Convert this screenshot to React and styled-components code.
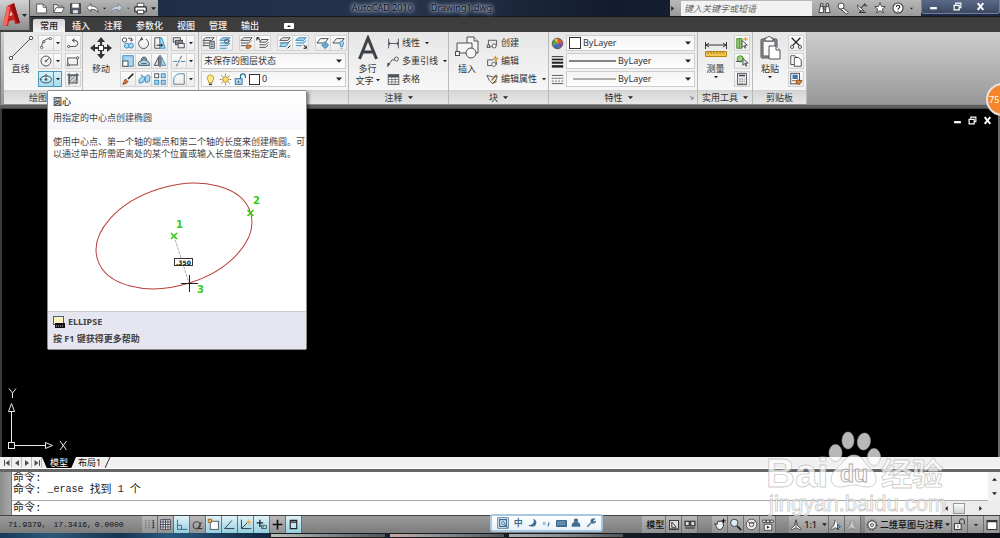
import { useState } from "react";
import styled, { createGlobalStyle, css } from "styled-components";

const GlobalStyle = createGlobalStyle`
  * { box-sizing: border-box; }
  body {
    margin: 0;
    overflow: hidden;
    font-family: "Noto Sans", "Noto Sans CJK SC", sans-serif;
    font-size: 9px;
    line-height: 12px;
    color: #333;
  }
  button, input, select { font: inherit; color: inherit; margin: 0; padding: 0; }
  button { background: none; border: none; }
  svg { display: block; flex: none; }
`;

const Window = styled.div`
  display: flex;
  flex-direction: column;
  min-height: 100vh;
  position: relative;
  overflow: hidden;
  background: #000;
`;

/* ---------- title and tabs ---------- */

const Header = styled.header`
  display: grid;
  grid-template-columns: 30px 1fr;
  grid-template-rows: 17px 15px;
  background: #3d3d3d;
`;

const AppButton = styled.button`
  grid-row: 1 / 3;
  height: 30px;
  display: flex;
  align-items: center;
  padding-left: 2px;
  background: linear-gradient(#d2d2d2, #8c8c8c);
  border-right: 1px solid #555;
`;

const TitleBar = styled.div`
  display: flex;
  min-width: 0;
  background: linear-gradient(90deg, #1d2c47, #25324a 40%, #131c2e 60%, #1e2b45);
  border-bottom: 1px solid #15181e;
`;

const QuickAccess = styled.div`
  display: flex;
  align-items: center;
  gap: 4px;
  width: 128px;
  padding-left: 5px;
  background: linear-gradient(#b6b6b6, #949494);
`;

const IconButton = styled.button`
  display: flex;
  align-items: center;
  justify-content: center;
`;

const TitleText = styled.div`
  flex: 1;
  display: flex;
  align-items: center;
  justify-content: center;
  gap: 18px;
  padding-left: 16px;
  color: #0b0f17;
  white-space: nowrap;
  text-shadow: 0 0 2px #a9b3c4, 0 0 4px #a9b3c4, 0 0 5px #8f9bb0, 0 0 7px #8f9bb0;
`;

const InfoCenter = styled.div`
  display: flex;
  align-items: center;
  gap: 6px;
  width: 251px;
  background: linear-gradient(#b8b8b8, #9a9a9a);
`;

const SearchBox = styled.input`
  width: 131px;
  height: 15px;
  padding-left: 3px;
  border: none;
  border-radius: 0;
  background: #f2f2f2;
  font-style: italic;
  outline: none;
  &::placeholder { color: #666; opacity: 1; }
`;

const WindowButtons = styled.div`
  display: flex;
  align-items: center;
  justify-content: space-between;
  width: 79px;
  height: 14px;
  padding: 0 14px 0 7px;
  color: #fff;
  background: linear-gradient(#5a6a87, #3b4963);
  border: 1px solid #72809a;
  border-top: none;
  border-radius: 0 0 3px 3px;
`;

const TabRow = styled.nav`
  display: flex;
  align-items: stretch;
  padding: 2px 0 0 3px;
`;

const Tab = styled.button`
  padding: 0 7px;
  line-height: 13px;
  font-weight: 500;
  color: #f2f2f2;
  ${({ $active }) => $active && css`
    color: #222;
    background: linear-gradient(#d5d5d5, #f4f4f4);
    border-radius: 2px 2px 0 0;
  `}
`;

/* ---------- ribbon ---------- */

const Ribbon = styled.div`
  display: flex;
  height: 72px;
  padding-left: 3px;
  background: linear-gradient(#cecece, #989898);
  border-left: 1px solid #777;
`;

const PanelBox = styled.section`
  display: flex;
  flex-direction: column;
  width: ${({ $width }) => $width}px;
  flex: none;
  border-right: 1px solid #b9b9b9;
  background: linear-gradient(#e6e6e6, #fbfbfb);
`;

const PanelBody = styled.div`
  display: flex;
  flex: 1;
  gap: 3px;
  padding: 3px 2px 0;
`;

const PanelTitle = styled.div`
  display: flex;
  align-items: center;
  justify-content: center;
  gap: 4px;
  height: 14px;
  padding: 0 3px;
  background: linear-gradient(#d6d6d6, #e6e6e6);
  border-top: 1px solid #cfcfcf;
`;

const TitleLabel = styled.div`
  flex: 1;
  display: flex;
  align-items: center;
  justify-content: center;
  gap: 5px;
  white-space: nowrap;
`;

const BigButton = styled.button`
  display: flex;
  flex-direction: column;
  align-items: center;
  width: ${({ $width }) => $width}px;
  flex: none;
  white-space: nowrap;
  svg:first-child { margin-bottom: 2px; }
`;

const BigLabel = styled.span`
  display: flex;
  align-items: center;
  gap: 2px;
`;

const Column = styled.div`
  display: flex;
  flex-direction: column;
  gap: 2px;
  flex: ${({ $grow }) => ($grow ? 1 : "none")};
  min-width: 0;
`;

const Row = styled.div`
  display: flex;
  align-items: center;
  gap: ${({ $gap = 0 }) => $gap}px;
`;

const Tool = styled.button`
  display: flex;
  align-items: center;
  justify-content: center;
  width: ${({ $narrow }) => ($narrow ? 8 : 16)}px;
  height: 16px;
  border: 1px solid ${({ $on }) => ($on ? "#4a9ab8" : "#d3d3d3")};
  background: ${({ $on }) => ($on ? "linear-gradient(#d6f1fa, #a5dcf0)" : "linear-gradient(#fbfbfb, #ececec)")};
  & + & { border-left: none; }
`;

const ListButton = styled.button`
  display: flex;
  align-items: center;
  gap: 2px;
  height: 16px;
  white-space: nowrap;
`;

const Field = styled.div`
  display: flex;
  align-items: center;
  gap: 2px;
  height: 16px;
  flex: 1;
  min-width: 0;
  padding: 0 3px 0 2px;
  border: 1px solid #cdcdcd;
  background: linear-gradient(#f4f4f4, #fdfdfd);
`;

const Select = styled.select`
  flex: 1;
  min-width: 0;
  height: 14px;
  border: none;
  outline: none;
  background: transparent;
  appearance: none;
`;

const Swatch = styled.span`
  width: ${({ $size }) => $size}px;
  height: ${({ $size }) => $size}px;
  border: 1px solid #333;
  background: #fff;
`;

const RibbonEdge = styled.div`
  height: 5px;
  background: #5e5e5e;
  border-top: 1px solid #8e8e8e;
  border-bottom: 1px solid #444;
`;

/* ---------- drawing area ---------- */

const Canvas = styled.main`
  flex: 1;
  display: flex;
  flex-direction: column;
  justify-content: space-between;
  background: #000;
  border-left: 2px solid #3c3c3c;
  border-right: 2px solid #6d6d6d;
`;

const DocButtons = styled.div`
  display: flex;
  align-self: flex-end;
  gap: 6px;
  padding: 7px 6px 0 0;
  color: #fff;
`;

const LayoutBar = styled.div`
  display: flex;
  align-items: stretch;
  height: 12px;
  padding-left: 2px;
  background: #f0f0f0;
  border-bottom: 1px solid #fff;
`;

const LayoutNav = styled.button`
  display: flex;
  align-items: center;
  justify-content: center;
  width: 10px;
  border-right: 1px solid #bbb;
`;

const LayoutTab = styled.button`
  line-height: 11px;
  padding: 0 8px;
  color: ${({ $active }) => ($active ? "#fff" : "#111")};
  background: ${({ $active }) => ($active ? "#000" : "transparent")};
  clip-path: ${({ $active }) => ($active ? "polygon(0 0, 100% 0, 86% 100%, 14% 100%)" : "none")};
  & + & { padding: 0 4px 0 2px; }
`;

/* ---------- command window ---------- */

const CommandWindow = styled.div`
  display: grid;
  grid-template-columns: 12px 1fr 12px;
  grid-template-rows: 29px 14px;
  border-top: 3px solid #666;
  background: #fff;
`;

const Grip = styled.div`
  grid-row: 1 / 3;
  background: linear-gradient(90deg, #8c8c8c, #a8a8a8);
  border-right: 1px solid #777;
`;

const History = styled.div`
  overflow: hidden;
  border-bottom: 1px solid #a8a8a8;
`;

const CommandText = styled.div`
  display: flex;
  gap: 6px;
  padding-left: 1px;
  height: 12px;
  font-family: "Liberation Mono", "Noto Sans CJK SC", monospace;
  font-size: 11px;
  line-height: 12px;
  color: #222;
`;

const Latin = styled.span`
  font-size: 10px;
`;

const VScroll = styled.div`
  display: flex;
  flex-direction: column;
  justify-content: space-between;
  align-items: center;
  padding: 5px 0;
  background: #f0f0f0;
`;

const CommandLine = styled.div`
  grid-column: 2 / 4;
  display: flex;
  align-items: center;
`;

const CommandLabel = styled.label`
  padding-left: 1px;
  font-family: "Liberation Mono", "Noto Sans CJK SC", monospace;
  font-size: 11px;
  color: #222;
`;

const CommandInput = styled.input`
  flex: 1;
  height: 12px;
  border: none;
  outline: none;
  background: transparent;
`;

const HScroll = styled.div`
  display: flex;
  align-items: center;
  justify-content: space-between;
  width: 60px;
  height: 14px;
  padding: 0 17px 0 4px;
  background: #ececec;
`;

const Thumb = styled.span`
  width: 12px;
  height: 11px;
  margin-right: 10px;
  border: 1px solid #999;
  background: linear-gradient(#fafafa, #d0d0d0);
`;

/* ---------- status bar ---------- */

const StatusBar = styled.footer`
  display: flex;
  align-items: stretch;
  height: 18px;
  background: linear-gradient(#9a9a9a, #7c7c7c);
  border-top: 1px solid #444;
  color: #111;
`;

const Coordinates = styled.div`
  display: flex;
  align-items: center;
  width: 142px;
  padding-left: 8px;
  gap: 7px;
  font-family: "Liberation Mono", monospace;
  font-size: 8px;
  span:last-child { margin-left: -4px; }
`;

const StatusButton = styled.button`
  display: flex;
  align-items: center;
  justify-content: center;
  gap: 2px;
  min-width: 16px;
  padding: 0 1px;
  white-space: nowrap;
  font-weight: 500;
  border-right: 1px solid #6f6f6f;
  background: ${({ $on }) => ($on ? "linear-gradient(#e2f3f8, #94cfe0)" : "linear-gradient(#b9b9b9, #929292)")};
`;

const Gap = styled.span`
  width: ${({ $width }) => $width}px;
`;

const Spacer = styled.span`
  flex: 1;
`;

const Taskbar = styled.div`
  display: flex;
  gap: 3px;
  height: 5px;
  padding-left: 270px;
  background: linear-gradient(90deg, #16395a, #2b5876 5%, #173553 12%, #27597f 17%, #122a44 26%, #141a24 60%, #0b0d12);
`;

const Task = styled.span`
  width: 116px;
  height: 5px;
  border: 1px solid #1b1b1b;
  background: linear-gradient(90deg, ${({ $tint }) => $tint}, #8d9499 40%, #4d545a);
`;

/* ---------- floating layers ---------- */

const Tooltip = styled.aside`
  position: absolute;
  top: 90px;
  left: 47px;
  width: 260px;
  border: 1px solid #8a8a8a;
  border-radius: 2px;
  background: #fff;
  box-shadow: 2px 2px 3px rgba(0, 0, 0, 0.45);
  white-space: nowrap;
  color: #444;
`;

const TipHead = styled.div`
  padding: 5px 5px 6px;
  background: linear-gradient(#fff, #f7f7fa);
  display: flex;
  flex-direction: column;
  gap: 4px;
  strong { color: #333; font-weight: 500; }
`;

const TipText = styled.p`
  margin: 0;
  padding: 6px 5px 0;
`;

const TipFoot = styled.div`
  display: flex;
  flex-direction: column;
  gap: 5px;
  padding: 4px 5px;
  border-top: 1px solid #c9c9d2;
  background: #e6e6f1;
  font-weight: 700;
  span { display: flex; align-items: center; gap: 3px; }
`;

const ImeBar = styled.div`
  position: absolute;
  left: 49%;
  bottom: 6px;
  display: flex;
  align-items: center;
  justify-content: space-between;
  width: 113px;
  height: 18px;
  padding: 0 5px;
  color: #3f6c92;
  background: linear-gradient(#fff, #eaf3fa);
  border: 2px solid #a6c8e2;
  border-radius: 3px;
`;

const Badge = styled.div`
  position: absolute;
  top: 83px;
  right: -19px;
  width: 33px;
  height: 33px;
  padding-left: 1px;
  border: 2px solid #e9e2dc;
  border-radius: 50%;
  background: #f68428;
  color: #fff;
  font-size: 9px;
  line-height: 29px;
`;

const Watermark = styled.svg`
  position: absolute;
  right: 52px;
  bottom: 16px;
  pointer-events: none;
`;

/* ---------- icons ---------- */

const G = "#4a4f55";
const B = "#3d8fc0";
const L = "#a9d6ee";

const glyphs = {
  arc: <><path d="M3 13C3 7 7 3 12 3" /><circle cx="3" cy="13" r="1.3" fill="#fff" /><circle cx="5.5" cy="6.5" r="1.3" fill="#fff" /><circle cx="13" cy="3" r="1.3" fill="#fff" /></>,
  circle: <><circle cx="8" cy="8" r="5.7" /><circle cx="8" cy="8" r="1" /><path d="M8.5 7.5 12 4" /></>,
  ellipse: <><ellipse cx="8" cy="8.5" rx="6.5" ry="4" /><circle cx="8" cy="8.5" r="1" fill={G} /><path d="M8 3v3M1 8.500h2" /><circle cx="8" cy="4" r="1" fill="#fff" /></>,
  polyline: <><path d="M3 12h7a3.500 3.500 0 0 0 0-7H8" /><path d="M10 3 7 5l3 2" /><circle cx="3" cy="12" r="1.300" fill="#fff" /></>,
  rect: <><rect x="2" y="4.500" width="11" height="8" /><circle cx="2.500" cy="12.500" r="1.300" fill="#fff" /><circle cx="13.300" cy="4.300" r="1.300" fill="#fff" /></>,
  hatch: <><rect x="3.500" y="3.500" width="9" height="9" fill="#cfcfcf" /><path d="M1 3.500h14M3.500 1v14M12.500 1v9" /><path d="M3 8l5-5M3 12l9-9M7 13l6-6M11 14l3-3" strokeWidth=".7" /></>,
  copy: <><circle cx="4" cy="4.500" r="2.500" /><circle cx="6.500" cy="11" r="2.800" fill={L} stroke={B} /><circle cx="11.500" cy="11" r="2.800" fill={L} stroke={B} /><path d="M8 2.500h4v3M10.500 4l1.500 2 1.500-2" /></>,
  rotate: <><path d="M5 3.500a5.700 5.700 0 1 0 5 0" /><path d="M5 1l1.500 3-3 .8" fill={G} /></>,
  stretch: <><path d="M2 2h6v12H2z" /><path d="M8 2h2l4 12H8z" fill={L} stroke={B} /><path d="M4 10.500h7M9 9l2 1.500L9 12" stroke="#222" /></>,
  scale: <><rect x="2" y="2" width="12" height="12" fill={L} stroke={B} /><rect x="2" y="8" width="6" height="6" fill="#fff" /></>,
  offset: <><path d="M2 13h12c1-3-1-5-3-5 1-6-7-6-6 0-3 0-4 2-3 5z" fill={L} stroke={G} /><path d="M5 11h6M7 8a1.500 1.500 0 1 1 2 0" /></>,
  mirror: <><path d="M6.500 3v10h-5z" fill="#ddd" /><path d="M9.500 3v10h5z" fill={L} stroke={B} /><path d="M8 1v14" stroke="#222" /></>,
  erase: <><path d="m14 2-6 6" stroke="#222" strokeWidth="2" /><path d="M5 8l3 3-2 2-4 1z" fill="#d4783c" stroke="#944418" /></>,
  explode: <><path d="M2 9l4-4 3 1-1 5-5 2zM9 6l4-3 2 2-1 6-4 1z" fill={L} stroke={B} /><path d="M5 3l1 2" /></>,
  array: <><rect x="2" y="2" width="4.500" height="4.500" fill="#fff" /><rect x="9.500" y="2" width="4.500" height="4.500" fill={L} stroke={B} /><rect x="2" y="9.500" width="4.500" height="4.500" fill={L} stroke={B} /><rect x="9.500" y="9.500" width="4.500" height="4.500" fill={L} stroke={B} /></>,
  order: <><rect x="1.500" y="2" width="8" height="5" fill="#eee" /><rect x="4" y="5" width="8" height="5" fill="#888" /><rect x="7" y="8.500" width="7" height="5" fill="#eee" /></>,
  trim: <><path d="M1 8.500h5M10 8.500h5" stroke={B} /><path d="M11 2 5 14" strokeDasharray="4 1" /></>,
  fillet: <><path d="M2 14V9a7 7 0 0 1 7-7h5" stroke={B} /><path d="M2 14h12V2" strokeWidth=".8" /></>,
  layer: <><path d="M4 2h10l-3 3H1zM1 8h8M1 11h7M1 8l2-2M1 11l2-2" /><rect x="9" y="6" width="5" height="8" fill="#e7f0f5" /><path d="M10 8h3M10 10h3M10 12h3" /></>,
  layerCurrent: <><path d="M5 2h9l-3 3H2zM2 8h9l3-3M2 11h9l3-3M2 14h8" stroke={B} fill={L} /><circle cx="10" cy="6" r="2.500" /></>,
  layerMatch: <><path d="M4 2h10l-3 3H1zM1 8h9M1 11h6M10 8l3-3" /><path d="M8 10l5 1-2 3-4 0z" fill="#d08a3c" stroke="#985820" /></>,
  layerPrev: <><path d="M6 4h8l-3 3H4zM4 10h7l3-3M4 13h7l3-3" /><path d="M5 5 1 2M1 2h3M1 2v3" stroke="#111" /></>,
  layerIso: <><path d="M5 2h9l-3 3H2zM2 8h9l3-3" /><path d="M5 8h7l-3 4H2z" fill={L} stroke={B} /><path d="M11 14l3-3" stroke="#111" /></>,
  layerUniso: <><path d="M5 2h9l-3 3H2zM2 8h9l3-3M2 11h7" stroke={B} fill={L} /><path d="M11 10l3 4M14 11v3h-3" stroke="#111" /></>,
  layerFreeze: <><path d="M5 3h9l-4 5H1z" /><circle cx="10.500" cy="10.500" r="3" fill={L} stroke={B} /><path d="M10.500 6v9M6 10.500h9" stroke={B} /></>,
  layerOff: <><path d="M5 3h9l-4 5H1z" /><path d="M9 9a2.200 2.200 0 1 1 4 0l-1 3h-2zM10 14h2" fill={L} stroke={B} /></>,
  bulb: <><path d="M5 9a4 4 0 1 1 6 0l-1 3H6z" fill="#ffe88c" stroke="#b59430" /><path d="M6 14h4" stroke="#444" strokeWidth="2" /></>,
  sun: <><circle cx="8" cy="8" r="3.500" fill="#ffe070" stroke="#a5832a" /><path d="M8 1v2M8 13v2M1 8h2M13 8h2M3 3l1.500 1.500M11.500 11.500 13 13M13 3l-1.500 1.500M4.500 11.500 3 13" stroke="#76612a" /></>,
  unlock: <><rect x="1.500" y="7" width="8.500" height="7" fill={L} stroke="#2b7297" /><path d="M8 7V4a3 3 0 0 1 6 0v2" stroke="#2b7297" strokeWidth="1.500" /><path d="M5.700 10v2" stroke="#222" /></>,
  linear: <><path d="M2 2v12M14 2v12M2 8h12M4 6 2 8l2 2M12 6l2 2-2 2" /></>,
  leader: <><path d="M1 14 6 6h3" /><path d="M1 14v-4l2 1z" fill={G} /><circle cx="11.500" cy="5" r="2.500" /></>,
  table: <><rect x="1.500" y="2" width="13" height="12" fill="#fff" /><path d="M1.500 4h13" strokeWidth="3" /><path d="M6 4v10M10 4v10M2 8h12M2 11h12" strokeWidth=".8" /></>,
  create: <><path d="M3 4h10v6h-2M3 4v8h4" /><circle cx="10" cy="11" r="2.500" fill="#fff" /><rect x="1.500" y="10" width="3" height="3" fill="#fff" /></>,
  edit: <><path d="M2 6h7M2 6v7h5M13 8v4" /><circle cx="9.500" cy="11.500" r="2.500" fill="#fff" /><path d="M12 1 9 5h3l-1 4 4-5h-3z" fill="#f4b33c" stroke="#c37a13" strokeWidth=".7" /></>,
  attrib: <><path d="M1 3l3 6 4 4 4-4 2-5-5 1-3-1z" fill="#eee" /><path d="M7 9l6-7M8 13l5-3" stroke="#8a5c22" strokeWidth="1.500" /></>,
  wheel: <><circle cx="8" cy="8" r="6.500" fill="#f0c23a" stroke="none" /><path d="M8 8V1.500A6.500 6.500 0 0 1 14 6z" fill="#e2572e" stroke="none" /><path d="M8 8l6-2a6.500 6.500 0 0 1-4 8z" fill="#8149b4" stroke="none" /><path d="M8 8l2 6a6.500 6.500 0 0 1-8-3.500z" fill="#2f6fc0" stroke="none" /><path d="M8 8l-6 2.500A6.500 6.500 0 0 1 4 3z" fill="#4ba446" stroke="none" /><circle cx="8" cy="8" r="6.500" stroke="#555" /></>,
  weights: <g stroke="#222"><path d="M1 2h14" /><path d="M1 5.500h14" strokeWidth="2" /><path d="M1 9.500h14" strokeWidth="2.500" /><path d="M1 14h14" strokeWidth="3" /></g>,
  types: <><path d="M1 3h14M1 13h14" /><path d="M1 6.500h14" strokeDasharray="3 1" /><path d="M1 10h14" strokeDasharray="2 2" /></>,
  quickSelect: <><path d="M2 3h6v11H2zM5 3v11" fill="#9bd07b" stroke="#4f8f35" /><path d="M8 5v8l2-2 1.500 3 1-.6L11 10.500h3z" fill="#fff" /><path d="M12 1v5M9.500 3.500h5" stroke="#e6a323" strokeWidth="1.500" /></>,
  selectAll: <><circle cx="6" cy="5.500" r="3.500" fill="#9bd07b" stroke="#4f8f35" /><path d="M1 8.500h7M9 5v8l2-2 1.500 3 1-.6L12 10.500h3z" fill="#ddd" /></>,
  calc: <><rect x="3" y="1.500" width="10" height="13" fill="#f6f6f6" /><path d="M4.500 4h7" strokeWidth="2" /><path d="M5 8h6M5 10.500h6M5 13h6" strokeDasharray="1.500 1" /></>,
  cut: <><path d="M3 2l9 9M13 2l-9 9" stroke="#222" strokeWidth="1.500" /><circle cx="3.500" cy="12.500" r="1.800" /><circle cx="12.500" cy="12.500" r="1.800" /></>,
  copyClip: <><path d="M2 2h5l2 2v8H2z" fill="#fff" /><path d="M6 4h5l3 3v7H6z" fill="#fff" /></>,
  matchProp: <><rect x="2" y="1.500" width="10" height="12" fill="#fff" /><rect x="4" y="3" width="6" height="5" fill="#3a77b5" stroke="none" /><path d="M3.500 10h5M9 9l6 1-3 4-4-1z" fill="#d7853a" stroke="#8d511c" /></>,
  newFile: <><path d="M2 2.500h8l4 4v7H2z" fill="#fff" /><path d="M10 2.500v4h4" /></>,
  open: <><path d="M2 13V3h4l1 2h6v2" fill="#eee" /><path d="M2 13 5 7h10l-3 6z" fill="#fff" /></>,
  save: <><path d="M2 2h12v12H2z" fill="#555c66" stroke="#333" /><rect x="4" y="2" width="8" height="5" fill="#fff" stroke="none" /><rect x="5" y="10" width="6" height="4" fill="#ddd" stroke="none" /></>,
  undo: <path d="M1 7l5-5v3c5 0 9 2 9 8-2-3-4-4-9-4v3z" fill="#fff" />,
  redo: <path d="M15 7l-5-5v3c-5 0-9 2-9 8 2-3 4-4 9-4v3z" fill="#c7d1dc" stroke="#7d8894" />,
  print: <><path d="M4 6V1.500h8V6" fill="#fff" /><rect x="1" y="6" width="14" height="6" rx="1" fill="#fff" stroke="#222" strokeWidth="1.500" /><path d="M4 10h8v4.500H4z" fill="#fff" stroke="#222" /></>,
  binoculars: <><path d="M3 5h3l1 8H1zM10 5h3l2 8H9z" fill="#fff" stroke="#333" /><path d="M3 2h3v3H3zM10 2h3v3h-3zM7 6h2v3H7z" fill="#fff" stroke="#333" /></>,
  key: <><path d="M7 7l7 6-2 2-7-6z" fill="#fff" stroke="#333" /><circle cx="5" cy="5" r="3.700" fill="#fff" stroke="#333" /></>,
  dish: <><path d="M2 4c0 6 4 8 9 8z" fill="#fff" stroke="#333" /><path d="M7 8l5-6M12 2v3h3M4 14h9M7 11l-2 3" stroke="#333" strokeWidth="1.400" /></>,
  star: <path d="m8 1 2 5h5l-4 3.500 1.500 5L8 11.500l-4.500 3 1.500-5L1 6h5z" fill="#fff" stroke="#333" />,
  help: <><circle cx="8" cy="8" r="6.700" fill="#fff" stroke="#333" strokeWidth="1.400" /><path d="M5.800 6.500c0-3 4.600-3 4.600 0 0 1.800-2.400 1.500-2.400 3.500M8 11.500v1.500" stroke="#222" strokeWidth="1.500" /></>,
  snap: <path d="M3 3h1M7 3h1M11 3h1M3 6h1M7 6h1M11 6h1M3 9h1M7 9h1M11 9h1M3 12h1M7 12h1M11 12h3M13 3v9" stroke="#333" />,
  grid: <path d="M2 2h12v12H2zM5 2v12M8 2v12M11 2v12M2 5h12M2 8h12M2 11h12" fill="#eee" stroke="#445" />,
  ortho: <path d="M3 2v12h12M3 9h5v5" stroke="#355e75" />,
  polar: <><path d="M14 13H8l5-8" stroke="#222" /><circle cx="7" cy="9" r="4.500" stroke="#333" /></>,
  osnap: <><rect x="4" y="4" width="10" height="10" fill="#fff" /><rect x="1.500" y="1.500" width="4" height="4" fill="#f0b568" stroke="#a8641d" /></>,
  otrack: <path d="M14 13H2L11 3" stroke="#234" />,
  ducs: <><path d="M3 2v11h12M3 13l7-7" stroke="#234" /><path d="M12 1 9 6h3l-1 4 4-6h-3z" fill="#f4a33c" stroke="none" /></>,
  dyn: <><path d="M6 2v9M2 6h8" stroke="#123" strokeWidth="1.600" /><path d="M8 9h6v4H8zM10 9v4" /></>,
  lwt: <path d="M8 2v12M2 8h12" stroke="#111" strokeWidth="2" />,
  qp: <path d="M4 3h8v10H4zM4 5h8" stroke="#222" strokeWidth="1.400" fill="#bfe6f2" />,
  sheet: <><rect x="2" y="2" width="12" height="12" fill="#ddd" stroke="#222" /><path d="M5 4v7h6zM3 13h10" stroke="#222" /></>,
  sheets: <path d="M1.500 3h5.500v6H1.500zM9 3h5.500v6H9zM1.500 12h13" fill="#ddd" stroke="#222" strokeWidth="1.500" />,
  pan: <><path d="M2 7l3 1 1-4h6l1 6-3 4H6z" fill="#eee" stroke="#333" /><path d="M13 1v5M10.500 3.500h5" stroke="#111" strokeWidth="1.300" /></>,
  zoom: <><circle cx="6.500" cy="6" r="4.500" fill="#d8eef7" stroke="#333" /><path d="m10 10 5 5" stroke="#222" strokeWidth="2" /></>,
  steering: <><circle cx="8" cy="8" r="6.500" fill="#eee" stroke="#444" /><circle cx="8" cy="8" r="2.700" stroke="#444" /><path d="M3 4c3 3 7 3 10 0" stroke="#444" /></>,
  motion: <><path d="M1 1.500h4v3H1zM6 1.500h4v3H6zM11 1.500h4v3h-4zM3 7h10v8H3z" fill="#fff" stroke="#333" /><path d="m6.500 9 4 2-4 2z" fill="#222" stroke="none" /></>,
  anno: <path d="M8 1 6 9l-5 4 1 1.500 6-3 6 3 1-1.500-5-4zM8 5v6" fill="#fff" stroke="#333" />,
  annoAuto: <><path d="M7 1 5 9l-4 4 1 1.500 5-3 5 3" fill="#fff" stroke="#333" /><path d="M10 7v7l4-4z" fill="#5ab" stroke="#345" /></>,
  annoScale: <><path d="M7 1 5 9l-4 4 1 1.500 5-3 5 3" fill="#ccc" stroke="#777" /><path d="M10 6l3 3M10 2l3 3" stroke="#888" /></>,
  gear: <><circle cx="8" cy="8" r="5.500" fill="#f5f5f5" stroke="#333" strokeWidth="1.200" /><circle cx="8" cy="8" r="6.700" stroke="#333" strokeDasharray="2 2" /><circle cx="8" cy="8" r="2" stroke="#333" /></>,
  lock: <><rect x="2" y="7" width="8" height="7" fill="#fff" stroke="#222" /><path d="M8 7V4a3 3 0 0 1 6 0v4M6 9v3" stroke="#222" /></>,
  clean: <path d="M1.500 2h13v12h-13zM2 3.500h12" fill="#fff" stroke="#333" strokeWidth="1.400" />,
  ime: <><rect x="1" y="1" width="14" height="14" fill="#e3eef7" /><path d="M3.500 3.500h9v9h-9zM10 10l4 4" strokeWidth="1.500" /><circle cx="8" cy="8" r="2" /></>,
  moon: <path d="M10 1c3 6-2 11-8 10 5 5 13 3 13-4 0-3-2-5-5-6z" fill="currentColor" stroke="none" />,
  punct: <><circle cx="4" cy="8" r="2" /><path d="M12 6v4l-2 3" strokeWidth="2" /></>,
  keyboard: <><rect x="0" y="3" width="16" height="10" rx="1" fill="currentColor" stroke="none" /><path d="M2 6h12M2 9h12" stroke="#dceaf5" strokeDasharray="2 1" /></>,
  person: <path d="M8 1a3 3 0 0 1 2 5.500c4 1 5 3 5 7.500H1C1 9.500 2 7.500 6 6.500A3 3 0 0 1 8 1z" fill="currentColor" stroke="none" />,
  wrench: <path d="M2 14 9 7M10 2a4 4 0 0 0-1 5 4 4 0 0 0 6-1l-3 1-2-2 3-3z" strokeWidth="2.200" />,
  minimize: <path d="M2 11h12" strokeWidth="4" />,
  restore: <><path d="M5 5V2h9v8h-3" strokeWidth="2" /><path d="M2 6h9v8H2z" strokeWidth="2.200" /></>,
  close: <path d="m3 2 10 12M13 2 3 14" strokeWidth="3.400" />,
  launcher: <path d="M3 3l8 8M13 5v8H5" strokeWidth="2" />,
  toFirst: <><path d="M3 2v12" strokeWidth="2" /><path d="M13 2v12L5 8z" fill={G} stroke="none" /></>,
  toPrev: <path d="M12 2v12L4 8z" fill={G} stroke="none" />,
  toNext: <path d="M4 2v12l8-6z" fill={G} stroke="none" />,
  toLast: <><path d="M13 2v12" strokeWidth="2" /><path d="M3 2v12l8-6z" fill={G} stroke="none" /></>,
};

function Icon({ name, size = 13, color = G }) {
  return (
    <svg width={size} height={size} viewBox="0 0 16 16" fill="none" stroke={color} strokeWidth="1.1" aria-hidden="true">
      {glyphs[name]}
    </svg>
  );
}

function Caret({ size = 5, color = "#222", turn = 0 }) {
  return (
    <svg width={size} height={size} viewBox="0 0 10 10" aria-hidden="true">
      <path d="M0 2.500h10L5 8z" fill={color} transform={`rotate(${turn} 5 5)`} />
    </svg>
  );
}

/* ---------- ribbon pieces ---------- */

function Panel({ title, width, caret, launcher, children }) {
  return (
    <PanelBox $width={width}>
      <PanelBody>{children}</PanelBody>
      <PanelTitle>
        <TitleLabel>{title}{caret && <Caret />}</TitleLabel>
        {launcher && <Icon name="launcher" size={5} />}
      </PanelTitle>
    </PanelBox>
  );
}

function Tools({ names, drop, on }) {
  return (
    <Row>
      {names.map((name) => (
        <Tool key={name} $on={on} aria-label={name}><Icon name={name} size={14} /></Tool>
      ))}
      {drop && <Tool $narrow $on={on} aria-label="more"><Caret size={4} /></Tool>}
    </Row>
  );
}

function ListItem({ icon, text, drop }) {
  return (
    <ListButton>
      <Icon name={icon} />
      {text}
      {drop && <><Gap $width={1} /><Caret size={4} /></>}
    </ListButton>
  );
}

function Property({ icon, label, children }) {
  return (
    <Row $gap={2}>
      <Icon name={icon} size={13} />
      <Field>
        {children}
        <Select aria-label={label}><option>ByLayer</option></Select>
        <Caret size={6} />
      </Field>
    </Row>
  );
}

function RibbonPanels() {
  return (
    <Ribbon>
      <Panel title="绘图" width={79} caret>
        <BigButton $width={29}>
          <svg width="26" height="26" viewBox="0 0 26 26" fill="#fff" stroke={G}>
            <path d="M3 23 23 3" /><circle cx="3" cy="23" r="1.700" /><circle cx="23" cy="3" r="1.700" />
          </svg>
          <BigLabel>直线</BigLabel>
        </BigButton>
        <Column>
          <Tools names={["arc"]} drop />
          <Tools names={["circle"]} drop />
          <Tools names={["ellipse"]} drop on />
        </Column>
        <Column>
          <Tools names={["polyline"]} />
          <Tools names={["rect"]} />
          <Tools names={["hatch"]} />
        </Column>
      </Panel>

      <Panel width={116}>
        <BigButton $width={32}>
          <svg width="26" height="26" viewBox="0 0 26 26" fill="#333" stroke="none">
            <path d="M13 2l4 5h-3v4h-2V7H9zM13 24l4-5h-3v-4h-2v4H9zM2 13l5-4v3h4v2H7v3zM24 13l-5-4v3h-4v2h4v3z" />
            <rect x="10.500" y="10.500" width="5" height="5" fill="#fff" stroke="#333" />
          </svg>
          <BigLabel>移动</BigLabel>
        </BigButton>
        <Column>
          <Tools names={["copy", "rotate", "stretch"]} />
          <Tools names={["scale", "offset", "mirror"]} />
          <Tools names={["erase", "explode", "array"]} />
        </Column>
        <Column>
          <Tools names={["order"]} drop />
          <Tools names={["trim"]} drop />
          <Tools names={["fillet"]} drop />
        </Column>
      </Panel>

      <Panel width={150}>
        <Column $grow>
          <Row $gap={6}>
            <Tools names={["layer", "layerCurrent"]} />
            <Tools names={["layerMatch", "layerPrev"]} />
            <Tools names={["layerIso", "layerUniso"]} />
            <Tools names={["layerFreeze", "layerOff"]} />
          </Row>
          <Row>
            <Field>
              <Select aria-label="图层状态"><option>未保存的图层状态</option></Select>
              <Caret size={6} />
            </Field>
          </Row>
          <Row>
            <Field>
              <Icon name="bulb" /><Icon name="sun" /><Icon name="unlock" /><Swatch $size={11} />
              <Select aria-label="图层"><option>0</option></Select>
              <Caret size={6} />
            </Field>
          </Row>
        </Column>
      </Panel>

      <Panel title="注释" width={100} caret>
        <BigButton $width={33}>
          <svg width="26" height="26" viewBox="0 0 26 26" fill="none" stroke="#3c4248" strokeWidth="3">
            <path d="M4.500 24 13 3l8.500 21M7.500 17h11" />
          </svg>
          <BigLabel>多行</BigLabel>
          <BigLabel>文字<Caret size={4} /></BigLabel>
        </BigButton>
        <Column>
          <ListItem icon="linear" text="线性" drop />
          <ListItem icon="leader" text="多重引线" drop />
          <ListItem icon="table" text="表格" />
        </Column>
      </Panel>

      <Panel title="块" width={100} caret>
        <BigButton $width={32}>
          <svg width="26" height="26" viewBox="0 0 26 26" fill="#f5f5f5" stroke={G}>
            <path d="M13 2h7l4 4v12H13z" /><path d="M20 2v4h4" /><path d="M3 8h15v10H3z" />
            <circle cx="17" cy="18" r="5" /><rect x="1.500" y="16.500" width="4" height="4" />
          </svg>
          <BigLabel>插入</BigLabel>
        </BigButton>
        <Column>
          <ListItem icon="create" text="创建" />
          <ListItem icon="edit" text="编辑" />
          <ListItem icon="attrib" text="编辑属性" drop />
        </Column>
      </Panel>

      <Panel title="特性" width={149} caret launcher>
        <Column $grow>
          <Property icon="wheel" label="颜色"><Swatch $size={12} /></Property>
          <Property icon="weights" label="线宽">
            <svg width="47" height="4"><path d="M0 2h47" stroke="#111" strokeWidth="1" /></svg>
          </Property>
          <Property icon="types" label="线型">
            <svg width="47" height="4"><path d="M4 2h43" stroke="#666" strokeWidth="1" /></svg>
          </Property>
        </Column>
      </Panel>

      <Panel title="实用工具" width={55} caret>
        <BigButton $width={31}>
          <svg width="26" height="26" viewBox="0 0 26 26" fill="none" stroke="#333">
            <path d="M2.500 7v7M23.500 7v7M3 10h20M6 8l-3 2 3 2M20 8l3 2-3 2" />
            <path d="M2.500 16.500h21v5h-21z" fill="#f5c64c" stroke="#b58418" />
            <path d="M5 17v2M8 17v2M11 17v2M14 17v2M17 17v2M20 17v2" stroke="#7c5b10" strokeWidth=".8" />
          </svg>
          <BigLabel>测量</BigLabel>
          <Caret size={4} />
        </BigButton>
        <Column>
          <Tools names={["quickSelect"]} />
          <Tools names={["selectAll"]} />
          <Tools names={["calc"]} />
        </Column>
      </Panel>

      <Panel title="剪贴板" width={54}>
        <BigButton $width={30}>
          <svg width="26" height="26" viewBox="0 0 26 26" fill="#f9f9f9" stroke={G}>
            <rect x="4" y="4" width="16" height="19" rx="1" fill="#9d9d9d" />
            <rect x="6" y="6" width="12" height="15" /><path d="M8 6V3h2c0-2 4-2 4 0h2v3z" />
            <path d="M12 11h7l4 4v9H12z" fill="#fff" /><path d="M19 11v4h4" />
          </svg>
          <BigLabel>粘贴</BigLabel>
          <Caret size={4} />
        </BigButton>
        <Column>
          <Tools names={["cut"]} />
          <Tools names={["copyClip"]} />
          <Tools names={["matchProp"]} />
        </Column>
      </Panel>
    </Ribbon>
  );
}

function EllipseTip() {
  return (
    <Tooltip role="tooltip">
      <TipHead>
        <strong>圆心</strong>
        <span>用指定的中心点创建椭圆</span>
      </TipHead>
      <TipText>
        使用中心点、第一个轴的端点和第二个轴的长度来创建椭圆。可<br />
        以通过单击所需距离处的某个位置或输入长度值来指定距离。
      </TipText>
      <svg width="258" height="151" viewBox="48 160 258 151" fontFamily="DejaVu Sans, sans-serif" fontWeight="700" fontSize="10">
        <ellipse cx="174" cy="236" rx="80" ry="49.500" transform="rotate(-17 174 236)" fill="none" stroke="#b8403a" />
        <path d="M174 236 189 283" stroke="#aaa" strokeDasharray="3 1" />
        <path d="M171 233l6 6M177 233l-6 6M247.500 210l6 6M253.500 210l-6 6" stroke="#3c1" strokeWidth="1.600" />
        <path d="M181 283.500h17M189.500 275v17" stroke="#222" />
        <rect x="174.500" y="258.500" width="18" height="7" fill="#fff" stroke="#333" />
        <text x="176" y="265" fontSize="6" fill="#111">.350</text>
        <g fill="#3c1">
          <text x="176" y="228">1</text>
          <text x="253" y="204">2</text>
          <text x="197" y="293">3</text>
        </g>
      </svg>
      <TipFoot>
        <span>
          <svg width="12" height="12" viewBox="0 0 12 12">
            <rect x=".5" y=".5" width="10" height="8" fill="#fbf6c0" stroke="#4a5b8c" />
            <path d="M2 7h10v5H2z" fill="#111" /><path d="M3 10h7" stroke="#ccc" strokeDasharray="1 1" />
          </svg>
          ELLIPSE
        </span>
        <span>按 F1 键获得更多帮助</span>
      </TipFoot>
    </Tooltip>
  );
}

const tabs = ["常用", "插入", "注释", "参数化", "视图", "管理", "输出"];

const toggles = [
  ["snap", false], ["grid", false], ["ortho", true], ["polar", false], ["osnap", true],
  ["otrack", true], ["ducs", true], ["dyn", true], ["lwt", false], ["qp", true],
];

function App() {
  const [tab, setTab] = useState("常用");
  const [modes, setModes] = useState(toggles);
  const [command, setCommand] = useState("");

  const toggleMode = (name) => {
    setModes(modes.map(([n, on]) => [n, n === name ? !on : on]));
  };

  return (
    <Window>
      <GlobalStyle />
      <Header>
        <AppButton aria-label="menu">
          <svg width="26" height="26" viewBox="0 0 26 26">
            <path d="M1 23 5 4l7-3 6 20-5 1-1-4-5 1-1 5z" fill="#c9211e" />
            <path d="M1 23 5 4l3 1-3 18z" fill="#f26a5c" />
            <path d="M12 1l6 20-3 .5L9 4z" fill="#8f1012" />
            <path d="M7.500 14l1.500-5 1.500 4z" fill="#e8e0e0" />
            <path d="M20 12h5l-2.500 3z" fill="#222" />
          </svg>
        </AppButton>
        <TitleBar>
          <QuickAccess>
            <IconButton aria-label="new"><Icon name="newFile" /></IconButton>
            <IconButton aria-label="open"><Icon name="open" /></IconButton>
            <IconButton aria-label="save"><Icon name="save" /></IconButton>
            <IconButton aria-label="undo"><Icon name="undo" /></IconButton>
            <Caret size={3} />
            <IconButton aria-label="redo"><Icon name="redo" /></IconButton>
            <Caret size={3} color="#666" />
            <IconButton aria-label="print"><Icon name="print" /></IconButton>
            <Caret size={5} />
          </QuickAccess>
          <TitleText><span>AutoCAD 2010</span><span>Drawing1.dwg</span></TitleText>
          <InfoCenter>
            <Caret turn={-90} />
            <SearchBox aria-label="search" placeholder="键入关键字或短语" />
            <IconButton aria-label="find"><Icon name="binoculars" /></IconButton>
            <IconButton aria-label="key"><Icon name="key" /></IconButton>
            <IconButton aria-label="dish"><Icon name="dish" size={12} /></IconButton>
            <IconButton aria-label="star"><Icon name="star" size={12} /></IconButton>
            <IconButton aria-label="help"><Icon name="help" size={12} /></IconButton>
            <Caret size={3} />
          </InfoCenter>
          <WindowButtons>
            <Icon name="minimize" size={9} color="currentColor" />
            <Icon name="restore" size={9} color="currentColor" />
            <Icon name="close" size={9} color="currentColor" />
          </WindowButtons>
        </TitleBar>
        <TabRow>
          {tabs.map((t) => (
            <Tab key={t} $active={t === tab} onClick={() => setTab(t)}>{t}</Tab>
          ))}
          <Tab aria-label="minimize">
            <svg width="22" height="6" viewBox="0 0 22 6">
              <rect x="11" width="10" height="6" rx="1" fill="#fff" /><path d="M14 4h4l-2-2z" fill="#222" />
            </svg>
          </Tab>
        </TabRow>
      </Header>

      <RibbonPanels />
      <RibbonEdge />

      <Canvas>
        <DocButtons>
          <Icon name="minimize" size={9} color="currentColor" />
          <Icon name="restore" size={9} color="currentColor" />
          <Icon name="close" size={9} color="currentColor" />
        </DocButtons>
        <svg width="74" height="74" viewBox="2 384 74 74" fill="none" stroke="#e8e8e8">
          <rect x="8.500" y="443.500" width="6" height="6" />
          <path d="M11.500 443v-30M8.500 412.500l3-8 3 8zM15 446.500h30M45.500 443.500l7 3-7 3z" />
          <path d="M9 389.500l3.500 4.500 3.500-4.500M12.500 394v5M60 442l6.500 9M66.500 442l-6.500 9" />
        </svg>
      </Canvas>

      <LayoutBar>
        <LayoutNav aria-label="first"><Icon name="toFirst" size={8} /></LayoutNav>
        <LayoutNav aria-label="previous"><Icon name="toPrev" size={8} /></LayoutNav>
        <LayoutNav aria-label="next"><Icon name="toNext" size={8} /></LayoutNav>
        <LayoutNav aria-label="last"><Icon name="toLast" size={8} /></LayoutNav>
        <LayoutTab $active>模型</LayoutTab>
        <LayoutTab>布局1</LayoutTab>
        <svg width="6" height="11"><path d="M0 11 5 0" stroke="#333" /></svg>
      </LayoutBar>

      <CommandWindow>
        <Grip />
        <History>
          <CommandText><span>命令:</span></CommandText>
          <CommandText>
            <span>命令:</span><Latin>_erase</Latin><span>找到</span><Latin>1</Latin><span>个</span>
          </CommandText>
        </History>
        <VScroll><Caret turn={180} /><Caret /></VScroll>
        <CommandLine>
          <CommandLabel htmlFor="command">命令:</CommandLabel>
          <CommandInput id="command" value={command} onChange={(e) => setCommand(e.target.value)} />
          <HScroll><Caret turn={90} /><Thumb /><Caret turn={-90} /></HScroll>
        </CommandLine>
      </CommandWindow>

      <StatusBar>
        <Coordinates><span>71.9379,</span><span>17.3416,</span><span>0.0000</span></Coordinates>
        {modes.map(([name, on]) => (
          <StatusButton key={name} $on={on} aria-label={name} onClick={() => toggleMode(name)}>
            <Icon name={name} />
          </StatusButton>
        ))}
        <Spacer />
        <StatusButton><Gap $width={1} />模型</StatusButton>
        <StatusButton aria-label="sheet"><Icon name="sheet" size={12} /></StatusButton>
        <StatusButton aria-label="sheets"><Icon name="sheets" size={12} /></StatusButton>
        <Gap $width={14} />
        <StatusButton aria-label="pan"><Icon name="pan" /></StatusButton>
        <StatusButton aria-label="zoom"><Icon name="zoom" /></StatusButton>
        <StatusButton aria-label="wheel"><Icon name="steering" /></StatusButton>
        <StatusButton aria-label="motion"><Icon name="motion" size={12} /></StatusButton>
        <Gap $width={13} />
        <StatusButton><Icon name="anno" size={12} />1:1<Gap $width={1} /><Caret /></StatusButton>
        <StatusButton aria-label="visibility"><Icon name="annoAuto" size={12} /></StatusButton>
        <StatusButton aria-label="auto scale"><Icon name="annoScale" size={12} /></StatusButton>
        <Gap $width={4} />
        <StatusButton><Icon name="gear" size={12} />二维草图与注释<Caret /></StatusButton>
        <StatusButton aria-label="lock"><Icon name="lock" size={13} /></StatusButton>
        <StatusButton aria-label="more"><Caret size={4} /></StatusButton>
        <StatusButton aria-label="clean screen"><Icon name="clean" size={12} /></StatusButton>
      </StatusBar>

      <Taskbar>
        <Task $tint="#b4c0b8" /><Task $tint="#c8a8a4" /><Task $tint="#a6abb0" />
      </Taskbar>

      <EllipseTip />

      <ImeBar>
        <Icon name="ime" size={12} color="currentColor" />
        <strong>中</strong>
        <Icon name="moon" size={10} color="currentColor" />
        <Icon name="punct" size={9} color="currentColor" />
        <Icon name="keyboard" size={11} color="currentColor" />
        <Icon name="person" size={10} color="currentColor" />
        <Icon name="wrench" size={10} color="currentColor" />
      </ImeBar>

      <Badge>75</Badge>

      <Watermark width="184" height="94" viewBox="764 428 184 94" fontFamily="Liberation Sans, Noto Sans CJK SC, sans-serif">
        <g fill="#fff" fillOpacity=".72" stroke="#aaa" strokeOpacity=".6" strokeWidth=".9">
          <ellipse cx="835.500" cy="453" rx="6.500" ry="8.500" />
          <ellipse cx="848" cy="440.500" rx="6" ry="8.500" />
          <ellipse cx="864" cy="441.500" rx="6.500" ry="8.500" transform="rotate(10 864 441)" />
          <ellipse cx="874" cy="457" rx="6.500" ry="8.500" />
          <path d="M854 455c8 0 10 8 16 13 9 7 8 19-2 19-6 0-9-2-14-2s-8 2-14 2c-10 0-12-11-3-19 7-6 9-13 17-13z" />
          <text x="766" y="487" fontSize="40" fontWeight="700">Bai</text>
          <text x="840" y="482" fontSize="23" fontWeight="700" stroke="#aaa" strokeOpacity="1">du</text>
          <text x="881" y="485" fontSize="31" fontFamily="Noto Sans CJK SC, sans-serif" fontWeight="700">经验</text>
          <text x="769" y="511" fontSize="22">jingyan.baidu.com</text>
        </g>
      </Watermark>
    </Window>
  );
}

export default App;
